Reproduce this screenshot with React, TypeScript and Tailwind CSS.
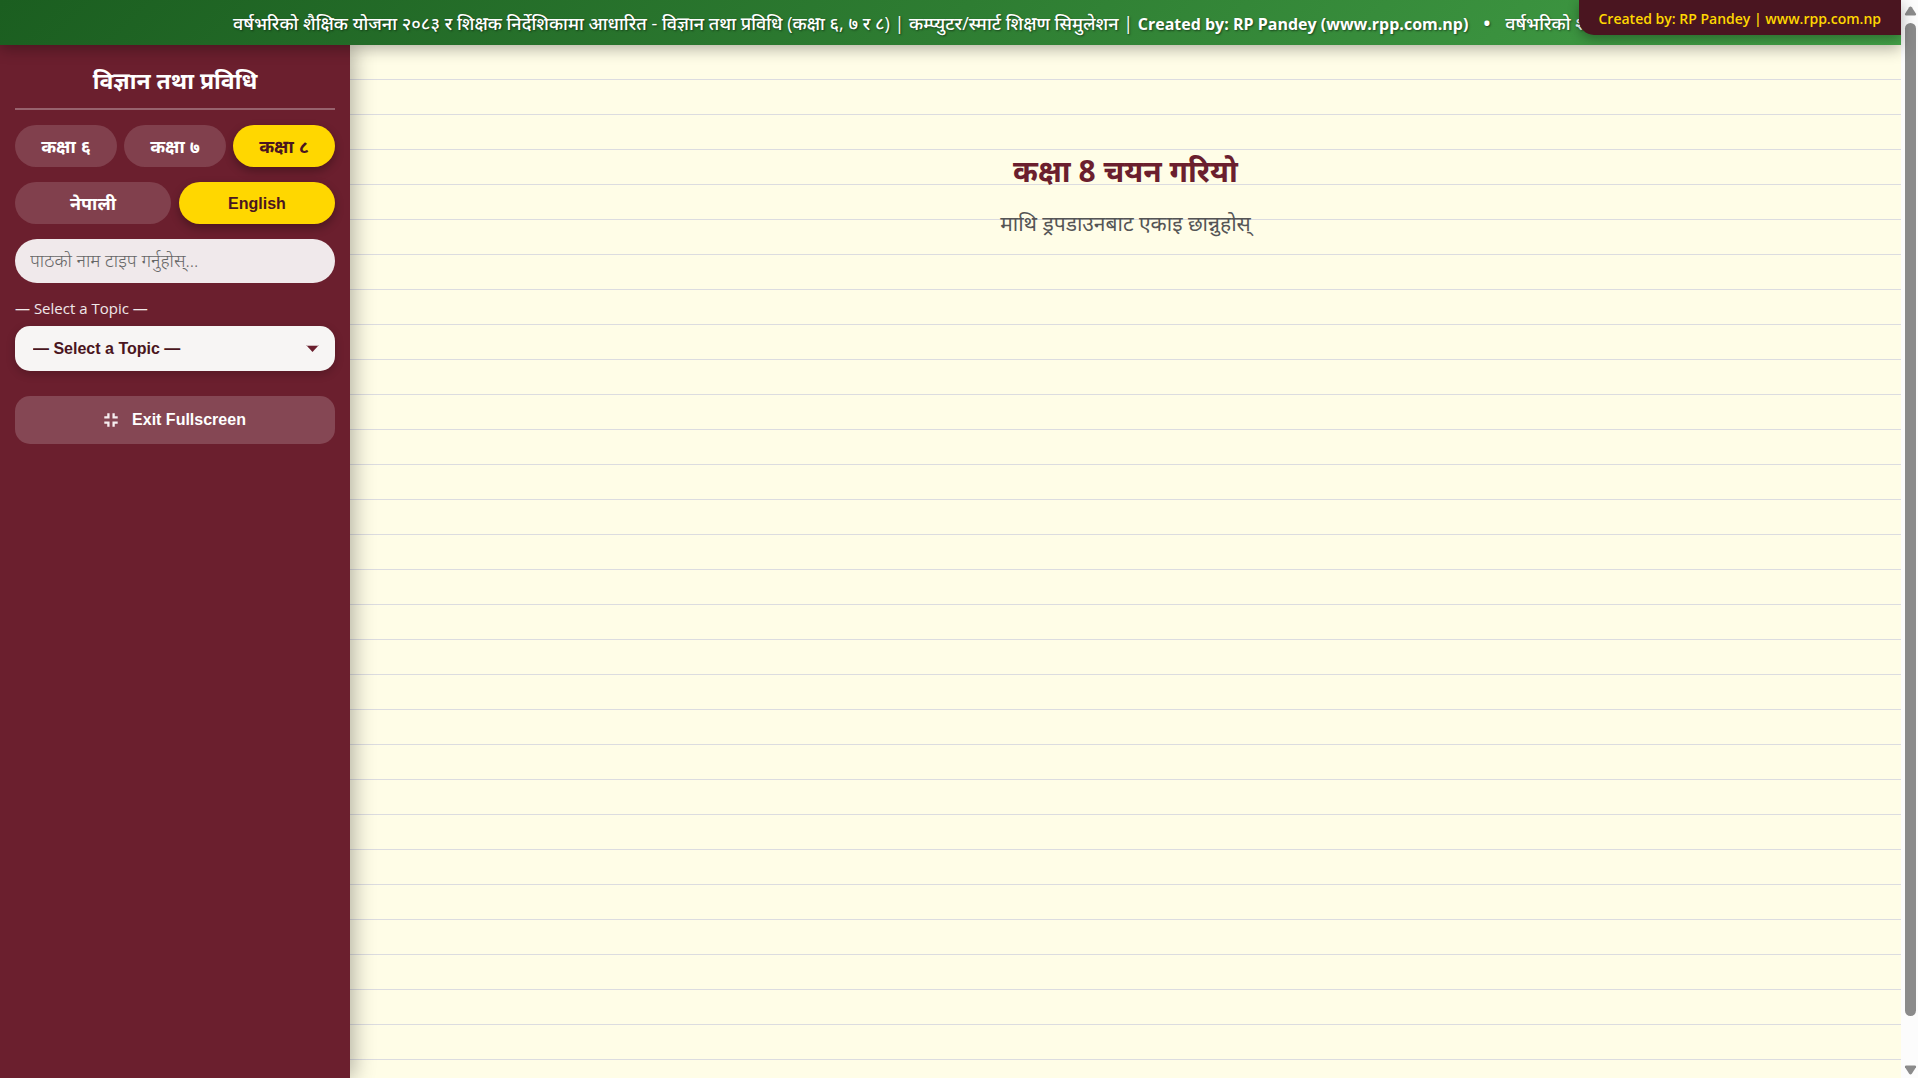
import React, { useState } from 'react';

const TICKER_TEXT =
  'वर्षभरिको शैक्षिक योजना २०८३ र शिक्षक निर्देशिकामा आधारित - विज्ञान तथा प्रविधि (कक्षा ६, ७ र ८) | कम्प्युटर/स्मार्ट शिक्षण सिमुलेशन | ';
const TICKER_CREDIT = 'Created by: RP Pandey (www.rpp.com.np)';

const GRADES = [
  { id: 6, label: 'कक्षा ६' },
  { id: 7, label: 'कक्षा ७' },
  { id: 8, label: 'कक्षा ८' },
];

const LANGUAGES = [
  { id: 'ne', label: 'नेपाली', size: 'text-lg' },
  { id: 'en', label: 'English', size: 'text-base' },
];

const pillBase =
  "h-[42px] flex-1 rounded-[25px] pt-px font-bold font-['Liberation_Sans','Noto_Sans',sans-serif]";
const pillOn = 'bg-[#ffd700] text-[#4a1520] shadow-[0_4px_10px_rgba(0,0,0,0.3)]';
const pillOff = 'bg-white/15 text-white';

const TickerItem: React.FC = () => (
  <span>
    {TICKER_TEXT}
    <span className="text-base font-bold">{TICKER_CREDIT}</span>
  </span>
);

const Header: React.FC = () => (
  <header className="relative z-20 flex h-[45px] items-center overflow-hidden bg-[linear-gradient(135deg,#1b5e20,#2e7d32,#43a047)] shadow-[0_4px_15px_rgba(0,0,0,0.3)]">
    <div className="flex gap-[15px] pt-[2px] pl-[233px] text-lg leading-6 font-medium whitespace-nowrap text-white [text-shadow:1px_1px_2px_rgba(0,0,0,0.5)]">
      <TickerItem />
      <span className="font-bold">•</span>
      <TickerItem />
    </div>
    <div className="absolute top-0 right-0 h-[35px] rounded-bl-[15px] bg-[#4a1520] px-5 text-sm leading-[38px] font-semibold whitespace-nowrap text-[#ffd700] shadow-[0_4px_12px_rgba(0,0,0,0.3)]">
      Created by: RP Pandey | www.rpp.com.np
    </div>
  </header>
);

const Sidebar: React.FC<{ grade: number; onGrade: (g: number) => void }> = ({ grade, onGrade }) => {
  const [lang, setLang] = useState('en');
  const [query, setQuery] = useState('');

  return (
    <aside className="z-10 flex w-[350px] shrink-0 flex-col bg-[#6b1f2e] px-[15px] pt-[15px] shadow-[4px_0_20px_rgba(0,0,0,0.3)]">
      <h1 className="h-[50px] border-b-2 border-white/30 text-center text-[23px] leading-10 font-bold text-white">
        विज्ञान तथा प्रविधि
      </h1>

      <div className="mt-[15px] flex gap-[7px]">
        {GRADES.map((g) => (
          <button
            key={g.id}
            type="button"
            onClick={() => onGrade(g.id)}
            className={`${pillBase} text-lg ${grade === g.id ? pillOn : pillOff}`}
          >
            {g.label}
          </button>
        ))}
      </div>

      <div className="mt-[15px] flex gap-2">
        {LANGUAGES.map((l) => (
          <button
            key={l.id}
            type="button"
            onClick={() => setLang(l.id)}
            className={`${pillBase} ${l.size} ${lang === l.id ? pillOn : pillOff}`}
          >
            {l.label}
          </button>
        ))}
      </div>

      <input
        type="text"
        aria-label="पाठको नाम"
        value={query}
        onChange={(e) => setQuery(e.target.value)}
        placeholder="पाठको नाम टाइप गर्नुहोस्..."
        className="mt-[15px] h-11 rounded-[25px] bg-[#f0e9eb] px-[15px] pb-[2px] text-lg font-light text-[#4a1520] outline-none placeholder:text-[#666]"
      />

      <label htmlFor="topic" className="mt-[14px] text-[15px] leading-[22px] text-white/90">
        — Select a Topic —
      </label>
      <div className="mt-[7px] grid items-center">
        <select
          id="topic"
          className="col-start-1 row-start-1 h-[45px] appearance-none rounded-[15px] bg-[#f7f5f4] px-[18px] font-['Liberation_Sans',sans-serif] text-base font-bold text-[#4a1520] shadow-[0_3px_10px_rgba(0,0,0,0.2)]"
        >
          <option>— Select a Topic —</option>
        </select>
        <svg
          className="pointer-events-none col-start-1 row-start-1 mr-4 justify-self-end"
          width="13"
          height="7"
          viewBox="0 0 13 7"
          aria-hidden="true"
        >
          <path d="M0 0h13v1H0z" fill="#cdb9bc" />
          <path d="M1 1h11L6.5 7z" fill="#6b1f2e" />
        </svg>
      </div>

      <button
        type="button"
        className="mt-[25px] flex h-12 items-center justify-center gap-[14px] rounded-[15px] bg-[#854754] font-['Liberation_Sans',sans-serif] text-base font-bold text-white"
      >
        <svg width="14" height="14" viewBox="0 0 14 14" fill="none" stroke="#f6eef0" strokeWidth="2.3" aria-hidden="true">
          <path d="M0.3 4.4h4.1V0.3M9.6 0.3v4.1h4.1M0.3 9.6h4.1v4.1M13.7 9.6H9.6v4.1" />
        </svg>
        Exit Fullscreen
      </button>
    </aside>
  );
};

const PageScrollbar: React.FC = () => (
  <div className="flex w-[17px] shrink-0 flex-col items-center bg-[#fcfcfc] pt-[6px] pb-[3px] pl-[2px]" aria-hidden="true">
    <svg width="13" height="10" viewBox="0 0 13 10">
      <path d="M6.5 0.5Q7.2 0.5 7.8 1.3L12 7.7Q12.6 9.5 11 9.5H2Q0.4 9.5 1 7.7L5.2 1.3Q5.8 0.5 6.5 0.5z" fill="#8b8b8b" />
    </svg>
    <div className="mt-[7px] mb-[49px] w-[11px] flex-1 rounded-full bg-[#8b8b8b]" />
    <svg width="13" height="10" viewBox="0 0 13 10">
      <path d="M6.5 9.5Q7.2 9.5 7.8 8.7L12 2.3Q12.6 0.5 11 0.5H2Q0.4 0.5 1 2.3L5.2 8.7Q5.8 9.5 6.5 9.5z" fill="#8b8b8b" />
    </svg>
  </div>
);

const App: React.FC = () => {
  const [grade, setGrade] = useState(8);

  return (
    <div className="flex min-h-screen font-['Open_Sans','Noto_Sans',sans-serif]">
      <div className="flex min-w-0 flex-1 flex-col">
        <Header />
        <div className="flex flex-1">
          <Sidebar grade={grade} onGrade={setGrade} />
          {/* ruled notebook paper */}
          <main className="flex-1 bg-[#fffde7] bg-[repeating-linear-gradient(transparent_0_34px,#dcdce0_34px_35px)] pt-[101px] text-center">
            <h2 className="text-[30px] leading-[50px] font-bold text-[#6b1f2e]">कक्षा {grade} चयन गरियो</h2>
            <p className="mt-[13px] text-[21px] leading-7 text-[#555]">माथि ड्रपडाउनबाट एकाइ छान्नुहोस्</p>
          </main>
        </div>
      </div>
      <PageScrollbar />
    </div>
  );
};

export default App;
